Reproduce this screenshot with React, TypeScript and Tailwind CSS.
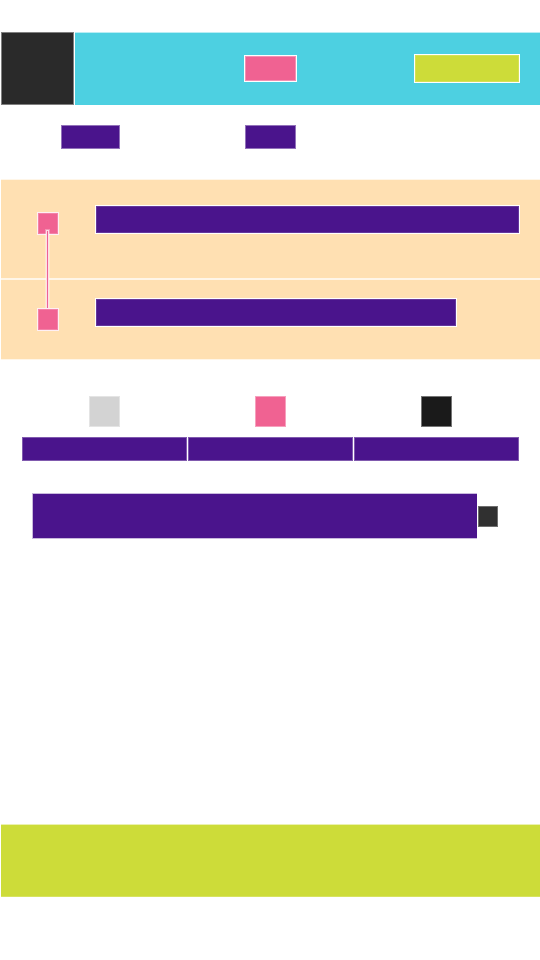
import React from "react";

type StepProps = { rowClass: string; markerClass: string; barClass: string; children?: React.ReactNode };

function Step({ rowClass, markerClass, barClass, children }: StepProps) {
  return (
    <li className={`flex items-start border-y border-white/70 bg-[#ffe0b2] pr-5 pl-9 ${rowClass}`}>
      <div className={`relative h-[23px] w-[22px] shrink-0 border border-white/90 bg-[#f06292] inset-ring inset-ring-white/20 ${markerClass}`}>
        {children}
      </div>
      <div className={`ml-9 h-[29px] border border-white bg-[#4a148c] inset-ring inset-ring-white/15 ${barClass}`} />
    </li>
  );
}

const options = ["bg-[#d3d3d3]", "bg-[#f06292]", "bg-[#1a1a1a]"];

export default function App() {
  return (
    <div className="flex min-h-screen flex-col bg-white pt-8 pb-[63px]">
      <header className="ml-px grid grid-cols-[1fr_auto_1fr] items-center bg-[#4dd0e1] shadow-[inset_0_1px_0_#b8edf4]">
        <div className="flex justify-start">
          <div className="border-r border-white">
            <button type="button" aria-label="Back" className="block size-[73px] border border-white/40 bg-[#2a2a2a]" />
          </div>
        </div>
        <div className="h-[27px] w-[53px] border border-white bg-[#f06292] inset-ring inset-ring-white/30" />
        <button
          type="button"
          aria-label="Action"
          className="mr-5 h-[29px] w-[106px] justify-self-end border border-white bg-[#cddc39] inset-ring inset-ring-white/15"
        />
      </header>

      <nav className="ml-px grid grid-cols-3 justify-items-center pt-5 pb-[30px]">
        <button type="button" aria-label="First tab" className="h-6 w-[59px] border border-white/40 bg-[#4a148c]" />
        <button type="button" aria-label="Second tab" className="h-6 w-[51px] border border-white/40 bg-[#4a148c]" />
      </nav>

      <ul className="ml-px">
        <Step rowClass="h-[100px]" markerClass="mt-8" barClass="mt-[25px] flex-1">
          <span className="absolute top-[17px] left-2 z-10 h-[79px] w-[3px] border-x border-t border-white/80 bg-[#f06292] ring-1 ring-white/30" />
        </Step>
        <Step rowClass="h-[81px]" markerClass="z-20 mt-7" barClass="mt-[18px] mr-[63px] flex-1" />
      </ul>

      <div className="mr-[21px] ml-[22px] grid grid-cols-3 gap-px pt-9">
        {options.map((color) => (
          <div key={color} className="flex flex-col items-center gap-2.5">
            <div className={`size-[31px] border border-white/40 ${color}`} />
            <div className="h-6 w-full border border-white/30 bg-[#4a148c]" />
          </div>
        ))}
      </div>

      <div className="mt-8 mr-[42px] ml-8 flex items-center gap-px">
        <div className="h-[46px] flex-1 border-y border-l border-white/70 bg-[#4a148c]" />
        <div className="h-[21px] w-5 border border-white/30 bg-[#303030]" />
      </div>

      <footer className="mt-auto ml-px h-[73px] border-y border-t-white/60 border-b-white/20 bg-[#cddc39]" />
    </div>
  );
}
